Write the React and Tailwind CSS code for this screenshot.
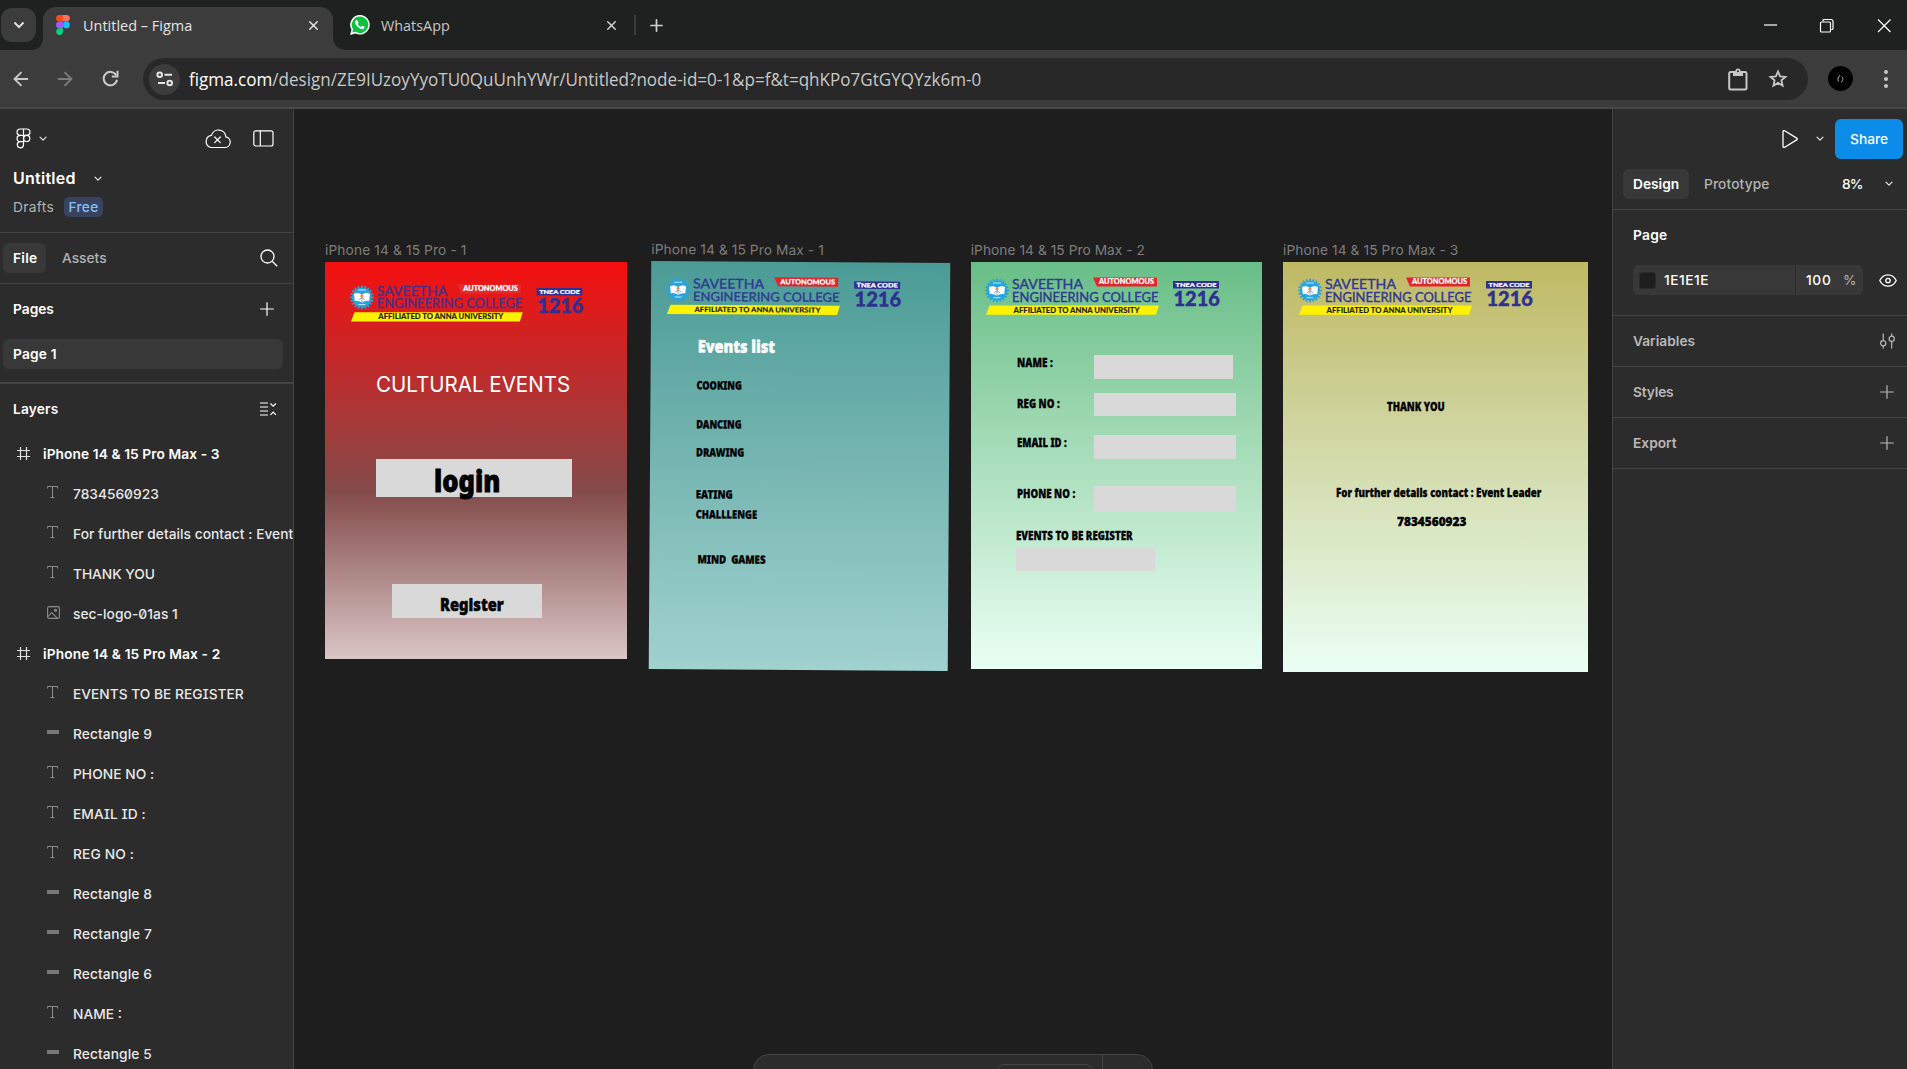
import React, { useLayoutEffect, useRef } from 'react';
import { ArrowLeft, ArrowRight, X, Plus } from 'lucide-react';

/* Text set to an exact advance width, by tracking (default) or by condensing. */
function Fit({ w, squeeze = false, className = '', children }) {
  const ref = useRef(null);
  useLayoutEffect(() => {
    const el = ref.current;
    el.style.letterSpacing = '0px';
    el.style.transform = 'none';
    const natural = el.offsetWidth;
    if (squeeze) el.style.transform = `scaleX(${w / natural})`;
    else el.style.letterSpacing = `${(w - natural) / Math.max(1, el.textContent.length)}px`;
  }, [w, squeeze, children]);
  return (
    <span className={`block whitespace-pre ${className}`} style={{ width: w }}>
      <span ref={ref} className="inline-block origin-left">{children}</span>
    </span>
  );
}

function Chevron({ className = '' }) {
  return (
    <svg width="8" height="6" viewBox="0 0 8 6" className={className} fill="none" stroke="#e6e6e6" strokeWidth="1.2" strokeLinecap="round" strokeLinejoin="round">
      <path d="M1 1.2 4 4.2 7 1.2" />
    </svg>
  );
}

function PlusThin({ color = '#ffffff' }) {
  return (
    <svg width="14" height="14" viewBox="0 0 14 14" fill="none" stroke={color} strokeWidth="1.2">
      <path d="M7 .2v13.6M.2 7h13.6" />
    </svg>
  );
}

function TabStrip() {
  return (
    <div className="flex h-[50px] shrink-0 items-start bg-[#1f2120] pl-px">
      <div className="mt-2 flex h-[34px] w-[35px] shrink-0 items-center justify-center rounded-[11px] bg-[#3c3c3c]">
        <svg width="12" height="8" viewBox="0 0 12 8" fill="none" stroke="#e3e3e3" strokeWidth="2"><path d="m1.500 1.500 4.500 4.600 4.500-4.600" /></svg>
      </div>
      <svg width="14" height="14" viewBox="0 0 14 14" className="mt-9 -ml-[7px] shrink-0"><path d="M14 0v14H2C10 14 14 9 14 0Z" fill="#3c3c3c" /></svg>
      <div className="mt-[7px] flex h-[43px] w-[290px] shrink-0 items-start rounded-t-[13px] bg-[#3c3c3c] pl-[13px]">
        <svg width="14" height="20" viewBox="0 0 14 20" className="mt-[8px]">
          <path d="M3.400 0H7v6.600H3.400a3.300 3.300 0 0 1 0-6.600Z" fill="#f24e1e" />
          <path d="M7 0h3.500a3.300 3.300 0 0 1 0 6.600H7Z" fill="#ff7262" />
          <path d="M3.400 6.600H7v6.600H3.400a3.300 3.300 0 0 1 0-6.600Z" fill="#a259ff" />
          <circle cx="10.400" cy="9.900" r="3.400" fill="#1abcfe" />
          <path d="M3.400 13.200H7v3.200a3.400 3.400 0 1 1-3.600-3.200Z" fill="#0acf83" />
        </svg>
        <Fit w={109} squeeze className="mt-[6px] ml-[13px] font-['Open_Sans',sans-serif] text-[15px] leading-6 text-[#e3e3e3]">Untitled – Figma</Fit>
        <X size={15} strokeWidth={2.3} color="#e3e3e3" className="mt-[10.5px] ml-[113.5px]" />
      </div>
      <svg width="14" height="14" viewBox="0 0 14 14" className="mt-9 shrink-0"><path d="M0 0v14h14C5 14 0 9 0 0Z" fill="#3c3c3c" /></svg>
      <svg width="20" height="20" viewBox="0 0 20 20" className="mt-[15px] ml-[2.5px] shrink-0">
        <path d="M10 0a9.800 9.800 0 0 0-8.500 14.700L.1 19.900l5.300-1.400A9.800 9.800 0 1 0 10 0Z" fill="#fff" />
        <path d="M10 1.600a8.200 8.200 0 0 0-6.900 12.700l-.8 3.300 3.400-.9A8.200 8.200 0 1 0 10 1.600Z" fill="#0dc143" />
        <path d="M7.200 5.400c-.3-.5-.9-.4-1.200-.1-1.500 1.500-.9 3.600.9 5.700 2 2.300 4.200 3.400 5.900 3.100 1.200-.2 1.900-1.100 1.800-2.100-.1-.4-2.200-1.400-2.500-1.300-.4.1-.9 1.200-1.200 1.200-.8 0-3.100-2.100-3.200-2.900 0-.3.800-.9.800-1.300 0-.3-.9-1.800-1.300-2.300Z" fill="#fff" />
      </svg>
      <Fit w={69} squeeze className="mt-[13px] ml-[11px] font-['Open_Sans',sans-serif] text-[15px] leading-6 text-[#c7c7c7]">WhatsApp</Fit>
      <X size={15} strokeWidth={2.3} color="#d0d0d0" className="mt-[17.5px] ml-[154px] shrink-0" />
      <div className="mt-[15px] ml-[15px] h-5 w-[2px] shrink-0 bg-[#3c3c3c]" />
      <Plus size={19} strokeWidth={2.2} color="#d0d0d0" className="mt-[15.5px] ml-[11px] shrink-0" />
      <div className="ml-auto flex h-[50px] items-center pr-[15px]">
        <svg width="129" height="15" viewBox="0 0 129 15" fill="none" stroke="#fff" strokeWidth="1.2">
          <path d="M1 7h13" />
          <rect x="57.500" y="4" width="10" height="10" rx="1" />
          <path d="M60 3.500V2.500a1 1 0 0 1 1-1h7a2 2 0 0 1 2 2v7a1 1 0 0 1-1 1h-.8" />
          <path d="m115 1.500 12.500 12.500m0-12.500L115 14" />
        </svg>
      </div>
    </div>
  );
}

function AddressBar() {
  return (
    <div className="flex h-[59px] shrink-0 items-start border-b-2 border-[#484848] bg-[#3c3c3c] pt-2">
      <ArrowLeft size={22} strokeWidth={2} color="#c9c9c9" className="mt-[10px] ml-[10px]" />
      <ArrowRight size={22} strokeWidth={2} color="#7c7c7c" className="mt-[10px] ml-[22px]" />
      <svg width="17" height="17" viewBox="0 0 17 17" className="mt-3 ml-[26px]" fill="none" stroke="#c9c9c9" strokeWidth="2">
        <path d="M14.200 5.200A6.700 6.700 0 1 0 15 9.800" /><path d="M15.500.8v5.700H9.800" />
      </svg>
      <div className="ml-6 flex h-[42px] w-[1665px] items-center rounded-full bg-[#282828] pl-[6px]">
        <div className="flex h-[31px] w-[31px] items-center justify-center rounded-full bg-[#3c3c3c]">
          <svg width="18" height="16" viewBox="0 0 18 16" fill="none" stroke="#e3e3e3" strokeWidth="2">
            <circle cx="3.700" cy="3.700" r="2.300" /><path d="M8.500 3.700H16M2 12h7" /><circle cx="13.700" cy="12" r="2.300" />
          </svg>
        </div>
        <Fit w={792} squeeze className="ml-[9px] font-['Open_Sans',sans-serif] text-[18px] leading-7 text-[#c7c7c7]"><span className="text-white">figma.com</span>/design/ZE9IUzoyYyoTU0QuUnhYWr/Untitled?node-id=0-1&amp;p=f&amp;t=qhKPo7GtGYQYzk6m-0</Fit>
        <svg width="20" height="23" viewBox="0 0 20 23" className="ml-auto" fill="none" stroke="#c7c7c7" strokeWidth="2">
          <rect x="1.200" y="4" width="17.300" height="17.500" rx="1.500" />
          <path d="M5 4h10v4H5z" fill="#c7c7c7" stroke="none" /><circle cx="10" cy="3.200" r="1.800" strokeWidth="1.600" fill="#282828" />
        </svg>
        <svg width="20" height="20" viewBox="0 0 20 20" className="mr-5 ml-5" fill="none" stroke="#c7c7c7" strokeWidth="1.800" strokeLinejoin="miter">
          <path d="m10 2.500 2.100 4.900 5.400.5-4.100 3.500 1.200 5.300L10 13.900l-4.600 2.800 1.200-5.300L2.500 7.900l5.400-.5Z" />
        </svg>
      </div>
      <div className="mt-2 ml-5 flex h-[25px] w-[25px] items-center justify-center rounded-full bg-black">
        <svg width="7" height="8" viewBox="0 0 7 8" fill="none" stroke="#b5b5b5" strokeWidth="1"><path d="M3.200.5C1 1.500.4 4 1.400 6.500M4.600 1.500c2 1.500 1.600 4.500-.6 5.700" /></svg>
      </div>
      <svg width="4" height="20" viewBox="0 0 4 20" className="mt-[10.5px] ml-[30.5px]" fill="#c7c7c7"><circle cx="2" cy="3" r="2" /><circle cx="2" cy="10" r="2" /><circle cx="2" cy="17" r="2" /></svg>
    </div>
  );
}

const layers = [
  ['frame', 'iPhone 14 & 15 Pro Max - 3', 177],
  ['text', '7834560923', 86],
  ['text', 'For further details contact : Event', 220],
  ['text', 'THANK YOU', 81.5],
  ['image', 'sec-logo-01as 1', 105],
  ['frame', 'iPhone 14 & 15 Pro Max - 2', 177],
  ['text', 'EVENTS TO BE REGISTER', 171],
  ['rect', 'Rectangle 9', 79],
  ['text', 'PHONE NO :', 81.5],
  ['text', 'EMAIL ID :', 72.5],
  ['text', 'REG NO :', 61],
  ['rect', 'Rectangle 8', 79],
  ['rect', 'Rectangle 7', 79],
  ['rect', 'Rectangle 6', 79],
  ['text', 'NAME :', 49],
  ['rect', 'Rectangle 5', 79],
];

function LayerIcon({ kind }) {
  if (kind === 'frame')
    return (
      <svg width="13" height="13" viewBox="0 0 13 13" fill="none" stroke="#e0e0e0" strokeWidth="1.200"><path d="M3.500 0v13M9.500 0v13M0 3.500h13M0 9.500h13" /></svg>
    );
  if (kind === 'image')
    return (
      <svg width="13" height="13" viewBox="0 0 13 13" fill="none" stroke="#8c8c8c" strokeWidth="1.100">
        <rect x=".6" y=".6" width="11.800" height="11.800" rx="1.500" /><path d="m1 10.500 3.700-4 5.800 5.800" /><circle cx="8.500" cy="4.300" r="1" fill="#8c8c8c" />
      </svg>
    );
  if (kind === 'rect') return <span className="block h-1 w-3 bg-[#777]" />;
  return (
    <svg width="12" height="12" viewBox="0 0 12 12" fill="none" stroke="#8c8c8c" strokeWidth="1"><path d="M.5 2.500v-2h10v2M5.500.5v11M3.500 11.500h4" /></svg>
  );
}

function LeftPanel() {
  return (
    <aside className="flex w-[294px] shrink-0 flex-col overflow-hidden border-r border-[#444] bg-[#2c2c2c] text-[13.75px] leading-5 font-medium text-white">
      <div className="h-[124px] shrink-0 border-b border-[#444]">
        <div className="flex items-center pt-[19px] pl-4">
          <svg width="15" height="21" viewBox="0 0 15 21" fill="none" stroke="#fff" strokeWidth="1.200">
            <path d="M7.500 1H4.200a3.100 3.100 0 0 0 0 6.300h3.300zM7.500 1h3.300a3.100 3.100 0 0 1 0 6.300H7.500zM7.500 7.300H4.200a3.100 3.100 0 0 0 0 6.300h3.300zM7.500 13.600H4.200a3.100 3.100 0 1 0 3.300 3.100z" /><circle cx="10.700" cy="10.400" r="3.100" />
          </svg>
          <Chevron className="ml-2" />
          <svg width="27" height="21" viewBox="0 0 27 21" className="ml-[157px]" fill="none" stroke="#fff" strokeWidth="1.200" strokeLinecap="round">
            <path d="M7 19.500h13.500a5.400 5.400 0 0 0 1.300-10.700A7.300 7.300 0 0 0 7.500 7.300 6.200 6.200 0 0 0 7 19.500ZM10.700 9l5.600 5.600m0-5.600-5.600 5.600" />
          </svg>
          <svg width="21" height="17" viewBox="0 0 21 17" className="ml-[22px]" fill="none" stroke="#fff" strokeWidth="1.200"><rect x=".8" y=".8" width="19.200" height="15.200" rx="2" /><path d="M7.300.8V16" /></svg>
        </div>
        <div className="mt-[19px] flex items-center pl-[13px]">
          <Fit w={63} className="text-[16px] font-semibold">Untitled</Fit>
          <Chevron className="mt-[2px] ml-[18px]" />
        </div>
        <div className="mt-[9px] flex items-center pl-[13px]">
          <Fit w={41} className="font-normal text-[#b3b3b3]">Drafts</Fit>
          <div className="ml-[10px] flex h-5 w-[39px] items-center justify-center rounded-[5px] bg-[#394360]"><Fit w={30} className="text-[#7cc4f8]">Free</Fit></div>
        </div>
      </div>
      <div className="flex h-[51px] shrink-0 items-center border-b border-[#444] pl-[3px]">
        <div className="flex h-[30px] w-[43px] items-center rounded-[6px] bg-[#383838] pl-[10px] font-semibold"><Fit w={24}>File</Fit></div>
        <Fit w={45} className="ml-4 text-[#b3b3b3]">Assets</Fit>
        <svg width="18" height="18" viewBox="0 0 18 18" className="ml-[152.5px]" fill="none" stroke="#fff" strokeWidth="1.300"><circle cx="7.500" cy="7.500" r="6.500" /><path d="m12.200 12.200 5 5" /></svg>
      </div>
      <div className="h-[100px] shrink-0 border-b-2 border-[#444]">
        <div className="flex h-[50px] items-center justify-between pr-[19px] pl-[13px] font-semibold"><Fit w={41}>Pages</Fit><PlusThin /></div>
        <div className="mt-[5px] ml-[3px] flex h-[30px] w-[280px] items-center rounded-[6px] bg-[#383838] pl-[10px] font-semibold"><Fit w={44}>Page 1</Fit></div>
      </div>
      <div className="mb-px flex h-[49px] shrink-0 items-center justify-between pr-[16px] pl-[13px] font-semibold">
        <Fit w={45}>Layers</Fit>
        <svg width="17" height="14" viewBox="0 0 17 14" fill="none" stroke="#fff" strokeWidth="1.200"><path d="M0 1h8M0 5h8M0 9h8M0 13h8M10.500 1.500l2.700 2.700 2.700-2.700M10.500 12.800l2.700-2.700 2.700 2.700" /></svg>
      </div>
      {layers.map(([kind, name, w], i) => (
        <div key={i} className={kind === 'frame' ? 'flex h-10 shrink-0 items-center pl-[17px] font-semibold' : 'flex h-10 shrink-0 items-center pl-[47px] text-[#e8e8e8]'}>
          <div className={kind === 'frame' ? 'mb-[2px] w-[26px]' : 'mb-1 w-[26px]'}><LayerIcon kind={kind} /></div>
          <Fit w={w} className="[font-feature-settings:'cv08','zero']">{name}</Fit>
        </div>
      ))}
    </aside>
  );
}

function RightPanel() {
  return (
    <aside className="flex w-[295px] shrink-0 flex-col border-l border-[#444] bg-[#2c2c2c] text-[13.75px] leading-5 font-medium text-white">
      <div className="h-[101px] shrink-0 border-b border-[#444] pt-[10px]">
        <div className="flex h-10 items-center justify-end pr-1">
          <svg width="17" height="20" viewBox="0 0 17 20" fill="none" stroke="#fff" strokeWidth="1.300" strokeLinejoin="round"><path d="M1 2.600v14.800c0 .9 1 1.300 1.700.8l12-7.300c.8-.5.800-1.300 0-1.800l-12-7.300C2 1.300 1 1.700 1 2.600Z" /></svg>
          <Chevron className="ml-[17px]" />
          <div className="ml-[11px] flex h-10 w-[68px] items-center justify-center rounded-[6px] bg-[#0c8ce9]"><Fit w={38}>Share</Fit></div>
        </div>
        <div className="mt-[10px] flex h-[30px] items-center pl-[10px]">
          <div className="flex h-[30px] w-[66px] items-center justify-center rounded-[6px] bg-[#383838] font-semibold"><Fit w={46}>Design</Fit></div>
          <Fit w={65} className="ml-[15px] text-[#b3b3b3]">Prototype</Fit>
          <Fit w={20} className="ml-[73px]">8%</Fit>
          <Chevron className="ml-[23px]" />
        </div>
      </div>
      <div className="h-[106px] shrink-0 border-b border-[#444] pt-[15px] pl-5">
        <Fit w={34} className="font-semibold">Page</Fit>
        <div className="mt-5 flex h-[30px] items-center">
          <div className="flex h-[30px] w-[230px] items-center rounded-[6px] bg-[#383838] pl-[6px]">
            <div className="h-[17px] w-[17px] rounded-[3px] border border-[#2a2a2a] bg-[#1e1e1e]" />
            <Fit w={45} className="ml-2">1E1E1E</Fit>
            <div className="ml-[86px] h-[30px] w-px bg-[#2c2c2c]" />
            <Fit w={25} className="ml-[10px]">100</Fit>
            <Fit w={11} className="ml-[12px] font-normal text-[#b3b3b3]">%</Fit>
          </div>
          <svg width="18" height="13" viewBox="0 0 18 13" className="ml-4" fill="none" stroke="#fff" strokeWidth="1.300"><path d="M.8 6.500C2.500 2.800 5.500.8 9 .8s6.500 2 8.200 5.700c-1.700 3.700-4.700 5.700-8.200 5.700S2.500 10.200.8 6.500Z" /><circle cx="9" cy="6.500" r="2.200" /></svg>
        </div>
      </div>
      <div className="flex h-[51px] shrink-0 items-center justify-between border-b border-[#444] pr-3 pl-5 text-[#b8b8b8]">
        <Fit w={62} className="font-semibold">Variables</Fit>
        <svg width="15" height="16" viewBox="0 0 15 16" fill="none" stroke="#b8b8b8" strokeWidth="1.200"><path d="M3.200.5v7M3.200 13v2.500M11.700 8.500v7M11.700.5V3" /><circle cx="3.200" cy="10.200" r="2.600" /><circle cx="11.700" cy="5.800" r="2.600" /></svg>
      </div>
      <div className="flex h-[51px] shrink-0 items-center justify-between border-b border-[#444] pr-[13px] pl-5 font-semibold text-[#b8b8b8]"><Fit w={41}>Styles</Fit><PlusThin color="#b8b8b8" /></div>
      <div className="flex h-[51px] shrink-0 items-center justify-between border-b border-[#444] pr-[13px] pl-5 font-semibold text-[#b8b8b8]"><Fit w={44}>Export</Fit><PlusThin color="#b8b8b8" /></div>
    </aside>
  );
}

function CollegeLogo({ x, y, flag = '#e3262b', ink = '#2e3a91', scale = 1 }) {
  const teeth = Array.from({ length: 20 }, (_, i) => i * 18);
  const t = (tx, ty, w, size, fill, weight, s, stroke = 0) => (
    <text x={tx} y={ty} textLength={w} lengthAdjust="spacingAndGlyphs" fontSize={size} fill={fill} stroke={fill} strokeWidth={stroke} fontWeight={weight} fontFamily="Lato, sans-serif">{s}</text>
  );
  return (
    <svg width={236 * scale} height={40 * scale} viewBox="0 0 236 40" className="absolute overflow-visible" style={{ left: x, top: y }}>
      {teeth.map((a) => <rect key={a} x="11.100" y="1.600" width="1.800" height="4" fill="#27a3dd" transform={`rotate(${a} 12 13.500)`} />)}
      <circle cx="12" cy="13.500" r="10" fill="#27a3dd" />
      <path d="M4 10 C6.500 8.600 9.500 9 12 11c2.500-2 5.500-2.400 8-1l-.8 7.200c-2.500-.8-5 0-7.200 1.600-2.200-1.600-4.700-2.400-7.200-1.600Z" fill="#fff" />
      <path d="M8.500 20.700h7M8 6h8" stroke="#bfe6f7" strokeWidth="1" />
      <circle cx="12" cy="12" r="1.600" fill="#f08a3c" /><path d="M12 13.500v5M9 15.800l3-2 3 2" stroke="#6d8db0" strokeWidth=".8" fill="none" />
      {t(27, 12, 71, 13.5, ink, 400, 'SAVEETHA', 0.35)}
      {t(27, 24.5, 146.5, 12.5, ink, 400, 'ENGINEERING COLLEGE', 0.35)}
      <path d="M108 .5h64v9h-60Z" fill={flag} />
      {t(114, 7.4, 55, 7, '#fff', 900, 'AUTONOMOUS', 0.2)}
      <path d="M4.500 28.500h169.500l-3 9.300H1Z" fill="#fff200" />
      {t(28.5, 35.6, 126, 7.3, '#231f20', 900, 'AFFILIATED TO ANNA UNIVERSITY', 0.1)}
      <rect x="188" y="4" width="46" height="7.500" fill="#2e3192" />
      {t(190.5, 10, 41, 6.2, '#fff', 900, 'TNEA CODE', 0.2)}
      {t(188.5, 29, 46.5, 20.5, '#2e3192', 900, '1216', 0.4)}
    </svg>
  );
}

/* A text object on the canvas: left edge, vertical centre of its capitals, width. */
function Label({ x, y, w, className = 'text-[11.5px] text-black [-webkit-text-stroke:0.3px]', children }) {
  return (
    <div className={`absolute font-['Noto_Sans',sans-serif] leading-[40px] font-black ${className}`} style={{ left: x, top: y - 20 }}>
      <Fit w={w} squeeze>{children}</Fit>
    </div>
  );
}

function Box({ x, y, w, h }) {
  return <div className="absolute bg-[#d9d9d9]" style={{ left: x, top: y, width: w, height: h }} />;
}

function Artboard({ x, y, w, h, title, titleWidth, className, children }) {
  return (
    <div className={`absolute ${className}`} style={{ left: x - 294, top: y - 109, width: w, height: h }}>
      <div className="absolute -top-[22px] left-0 text-[13.75px] leading-5 text-[#7d7d7d]"><Fit w={titleWidth}>{title}</Fit></div>
      {children}
    </div>
  );
}

function Canvas() {
  return (
    <main className="relative flex-1 overflow-hidden bg-[#1e1e1e]">
      <Artboard x={325} y={262} w={302} h={397} title="iPhone 14 & 15 Pro - 1" titleWidth={141.5} className="bg-[linear-gradient(180deg,#f50f0f_0%,#844b4b_58%,#d9c6c5_100%)]">
        <CollegeLogo x={24.500} y={22} flag="#e92a2c" ink="#47308a" scale={0.993} />
        <Label x={51} y={122} w={194} className="font-['Inter',sans-serif]! text-[21.5px] font-normal! text-white">CULTURAL EVENTS</Label>
        <Box x={50.500} y={197} w={196} h={38} />
        <Label x={108.500} y={218.500} w={66.500} className="text-[30px] text-black [-webkit-text-stroke:0.8px]">login</Label>
        <Box x={67} y={322} w={149.500} h={34} />
        <Label x={114.500} y={342} w={64} className="text-[17.5px] text-black [-webkit-text-stroke:0.5px]">Register</Label>
      </Artboard>
      <Artboard x={649.500} y={262} w={298.500} h={407.500} title="iPhone 14 & 15 Pro Max - 1" titleWidth={173} className="rotate-[0.36deg] bg-linear-to-b from-[#4a9b96] to-[#a0d2cf]">
        <CollegeLogo x={15} y={15} />
        <Label x={46.500} y={84.500} w={77} className="text-[17px] text-white [-webkit-text-stroke:0.5px]">Events list</Label>
        <Label x={46} y={123.500} w={45.500}>COOKING</Label>
        <Label x={46} y={163} w={45.500}>DANCING</Label>
        <Label x={45.500} y={191} w={48}>DRAWING</Label>
        <Label x={46} y={232.500} w={37}>EATING</Label>
        <Label x={46} y={253} w={61}>CHALLLENGE</Label>
        <Label x={48} y={298} w={68}>{'MIND  GAMES'}</Label>
      </Artboard>
      <Artboard x={970.700} y={262} w={291} h={407} title="iPhone 14 & 15 Pro Max - 2" titleWidth={174} className="bg-linear-to-b from-[#68be87] to-[#eafff4]">
        <CollegeLogo x={14.500} y={14.500} />
        <Label x={46} y={101} w={36}>NAME :</Label>
        <Label x={46} y={141.500} w={43}>REG NO :</Label>
        <Label x={46} y={181} w={49.500}>EMAIL ID :</Label>
        <Label x={46} y={232} w={58}>PHONE NO :</Label>
        <Label x={45} y={273.500} w={117}>EVENTS TO BE REGISTER</Label>
        <Box x={123} y={93} w={139.500} h={24} />
        <Box x={123} y={131} w={142} h={23} />
        <Box x={123} y={173} w={142} h={24} />
        <Box x={123} y={224} w={142} h={26} />
        <Box x={45.500} y={286} w={139} h={23} />
      </Artboard>
      <Artboard x={1283} y={262} w={304.500} h={410} title="iPhone 14 & 15 Pro Max - 3" titleWidth={175} className="bg-linear-to-b from-[#bfb962] to-[#eafff5]">
        <CollegeLogo x={15} y={14.500} />
        <Label x={104} y={144.500} w={58}>THANK YOU</Label>
        <Label x={52.500} y={231} w={205}>For further details contact : Event Leader</Label>
        <Label x={113.500} y={259.500} w={69}>7834560923</Label>
      </Artboard>
      <div className="absolute top-[945px] left-[459px] flex h-16 w-[400px] rounded-[16px] border border-[#444] bg-[#2c2c2c]">
        <div className="mt-[9px] ml-[244px] h-10 w-[94px] rounded-[6px] border border-[#444]" />
        <div className="ml-[10px] w-px bg-[#444]" />
      </div>
    </main>
  );
}

export default function App() {
  return (
    <div className="flex h-[1069px] w-[1907px] flex-col overflow-hidden bg-[#1e1e1e] font-['Inter',sans-serif]">
      <TabStrip />
      <AddressBar />
      <div className="flex min-h-0 flex-1">
        <LeftPanel />
        <Canvas />
        <RightPanel />
      </div>
    </div>
  );
}
